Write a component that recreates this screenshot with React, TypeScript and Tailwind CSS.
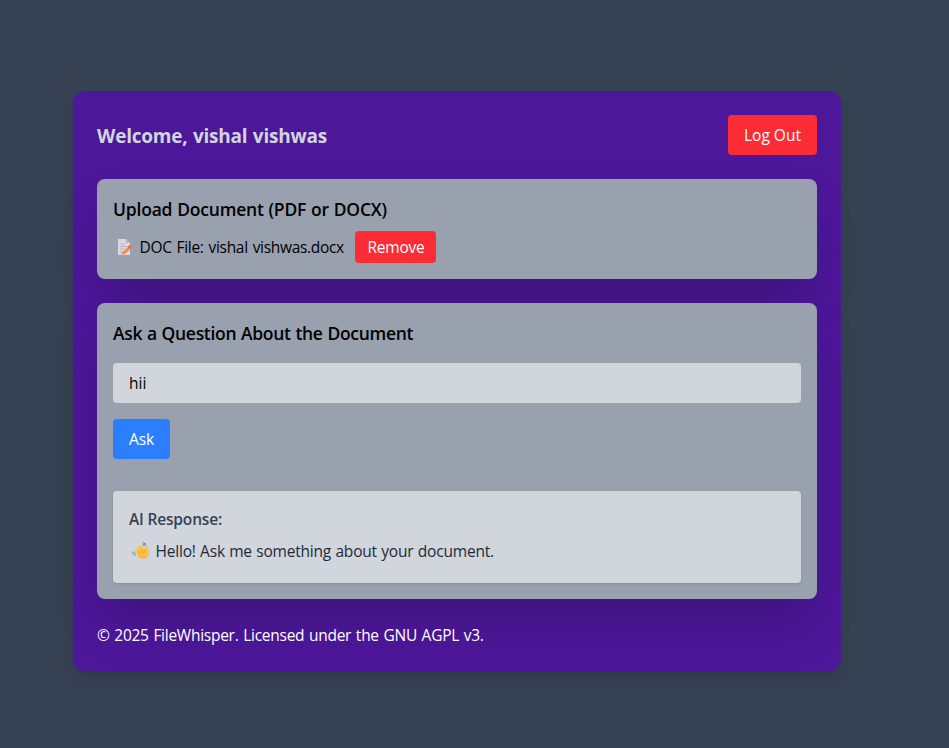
function MemoIcon() {
  return (
    <svg className="h-5 w-5 shrink-0" viewBox="0 0 20 20" fill="none" aria-hidden="true">
      <path d="M3 2h8l4 4v12H3z" fill="#dcd6e4" />
      <path d="M11 2l4 4h-4z" fill="#b9aec8" />
      <path d="M5 7h5M5 9.500h7M5 12h4M5 14.500h2" stroke="#b3a8c0" strokeWidth="0.8" />
      <path d="M6.800 15.600l6.200-6.200 2.500 2.600-5.600 5-3.600.700z" fill="#fb8b51" />
      <path d="M12.600 9.900l1.400-1.300c.7-.6 1.500-.5 2.100.2.6.7.5 1.400-.1 1.900l-1.400 1.300z" fill="#f4604f" />
      <path d="M7.700 15.200l5.300-5" stroke="#ffa35f" strokeWidth="0.9" />
    </svg>
  );
}

function WaveIcon() {
  return (
    <svg className="h-5 w-5 shrink-0" viewBox="0 0 20 20" fill="none" aria-hidden="true">
      <path
        d="M5.600 11.200l4.400 4.300M5.700 8.800l5 5M7.300 6.400l5 5.600M9.700 5l4.300 5.500"
        stroke="#ffc845"
        strokeWidth="2.200"
        strokeLinecap="round"
      />
      <path
        d="M8 9.500l5.800-1.700.9-2.400c.4-1.200 2.200-.9 2.200.5 0 .9-.1 1.900.3 3.100.9 2.900.6 5.500-1.400 7.100-2.300 1.800-5.200 1.500-7.100-.6L6 12.700z"
        fill="#ffbf3d"
      />
      <path
        d="M6.400 10.300l2.800 2.900M7.200 8l3.200 3.600M9 6.300l3.100 3.700"
        stroke="#e39a2e"
        strokeWidth="0.6"
        strokeLinecap="round"
      />
      <path d="M14.300 8.300c-1.400 1.200-1.900 2.300-1.500 3.900" stroke="#ee9a34" strokeWidth="0.7" strokeLinecap="round" />
      <path d="M7.400 15.300c2.600 2.500 6.600 2.500 8.700-.3" stroke="#f6a03c" strokeWidth="0.9" strokeLinecap="round" />
      <path d="M12.200 2c1.300-.2 2.300.5 2.500 1.800M12.200 3.700c.6 0 1 .3 1.100.9" stroke="#3f86c6" strokeWidth="1.100" strokeLinecap="round" />
      <path d="M1.700 10.800c-.2 1.900.7 3.100 2.400 3.400M3.300 11.100c0 .8.4 1.300 1.200 1.500" stroke="#5b98cc" strokeWidth="1" strokeLinecap="round" />
    </svg>
  );
}

export default function App() {
  return (
    <div className="min-h-screen bg-gray-700 pt-[91px] pl-[73px] font-['Open_Sans',sans-serif] text-[15.5px] leading-6 text-black">
      <div className="w-3xl rounded-xl bg-violet-900 p-6 shadow-lg">
        <header className="mb-6 flex items-center justify-between">
          <h1 className="pt-0.5 text-[19px] leading-7 font-bold tracking-[-0.22px] text-gray-300 [word-spacing:0.7px]">Welcome, vishal vishwas</h1>
          <button className="h-10 w-[89px] rounded-sm bg-[#fb2c36] text-white">Log Out</button>
        </header>

        <section className="mb-6 rounded-lg bg-gray-400 p-4 shadow-2xl">
          <h2 className="mb-2 text-[17.5px] leading-7 font-semibold tracking-[-0.2px] [word-spacing:0.5px]">Upload Document (PDF or DOCX)</h2>
          <div className="flex h-8 items-center">
            <span className="ml-0.5 flex w-[240px] items-center gap-[4.5px] tracking-[-0.31px] whitespace-nowrap [word-spacing:1.2px]">
              <MemoIcon />
              DOC File: vishal vishwas.docx
            </span>
            <button className="h-8 w-[81px] rounded-sm bg-[#fb2c36] pl-px tracking-[-0.2px] text-white">Remove</button>
          </div>
        </section>

        <section className="rounded-lg bg-gray-400 p-4 shadow-2xl">
          <h2 className="mb-4 text-[17.5px] leading-7 font-semibold tracking-[-0.3px] [word-spacing:0.5px]">Ask a Question About the Document</h2>
          <input
            type="text"
            defaultValue="hii"
            className="mb-4 block h-10 w-full rounded-sm bg-gray-300 px-4 outline-none"
          />
          <button className="block h-10 w-[57px] rounded-sm bg-[#2b7fff] tracking-[-0.1px] text-white">Ask</button>
          <div className="mt-8 h-[92px] rounded-sm bg-gray-300 p-4 shadow-sm">
            <h3 className="mb-2 font-semibold tracking-[-0.17px] text-gray-700">AI Response:</h3>
            <p className="ml-0.5 flex items-center gap-[4.5px] tracking-[-0.19px] text-gray-800 [word-spacing:0.5px]">
              <WaveIcon />
              Hello! Ask me something about your document.
            </p>
          </div>
        </section>

        <footer className="mt-6 tracking-[-0.26px] text-white [word-spacing:0.9px]">© 2025 FileWhisper. Licensed under the GNU AGPL v3.</footer>
      </div>
    </div>
  );
}
